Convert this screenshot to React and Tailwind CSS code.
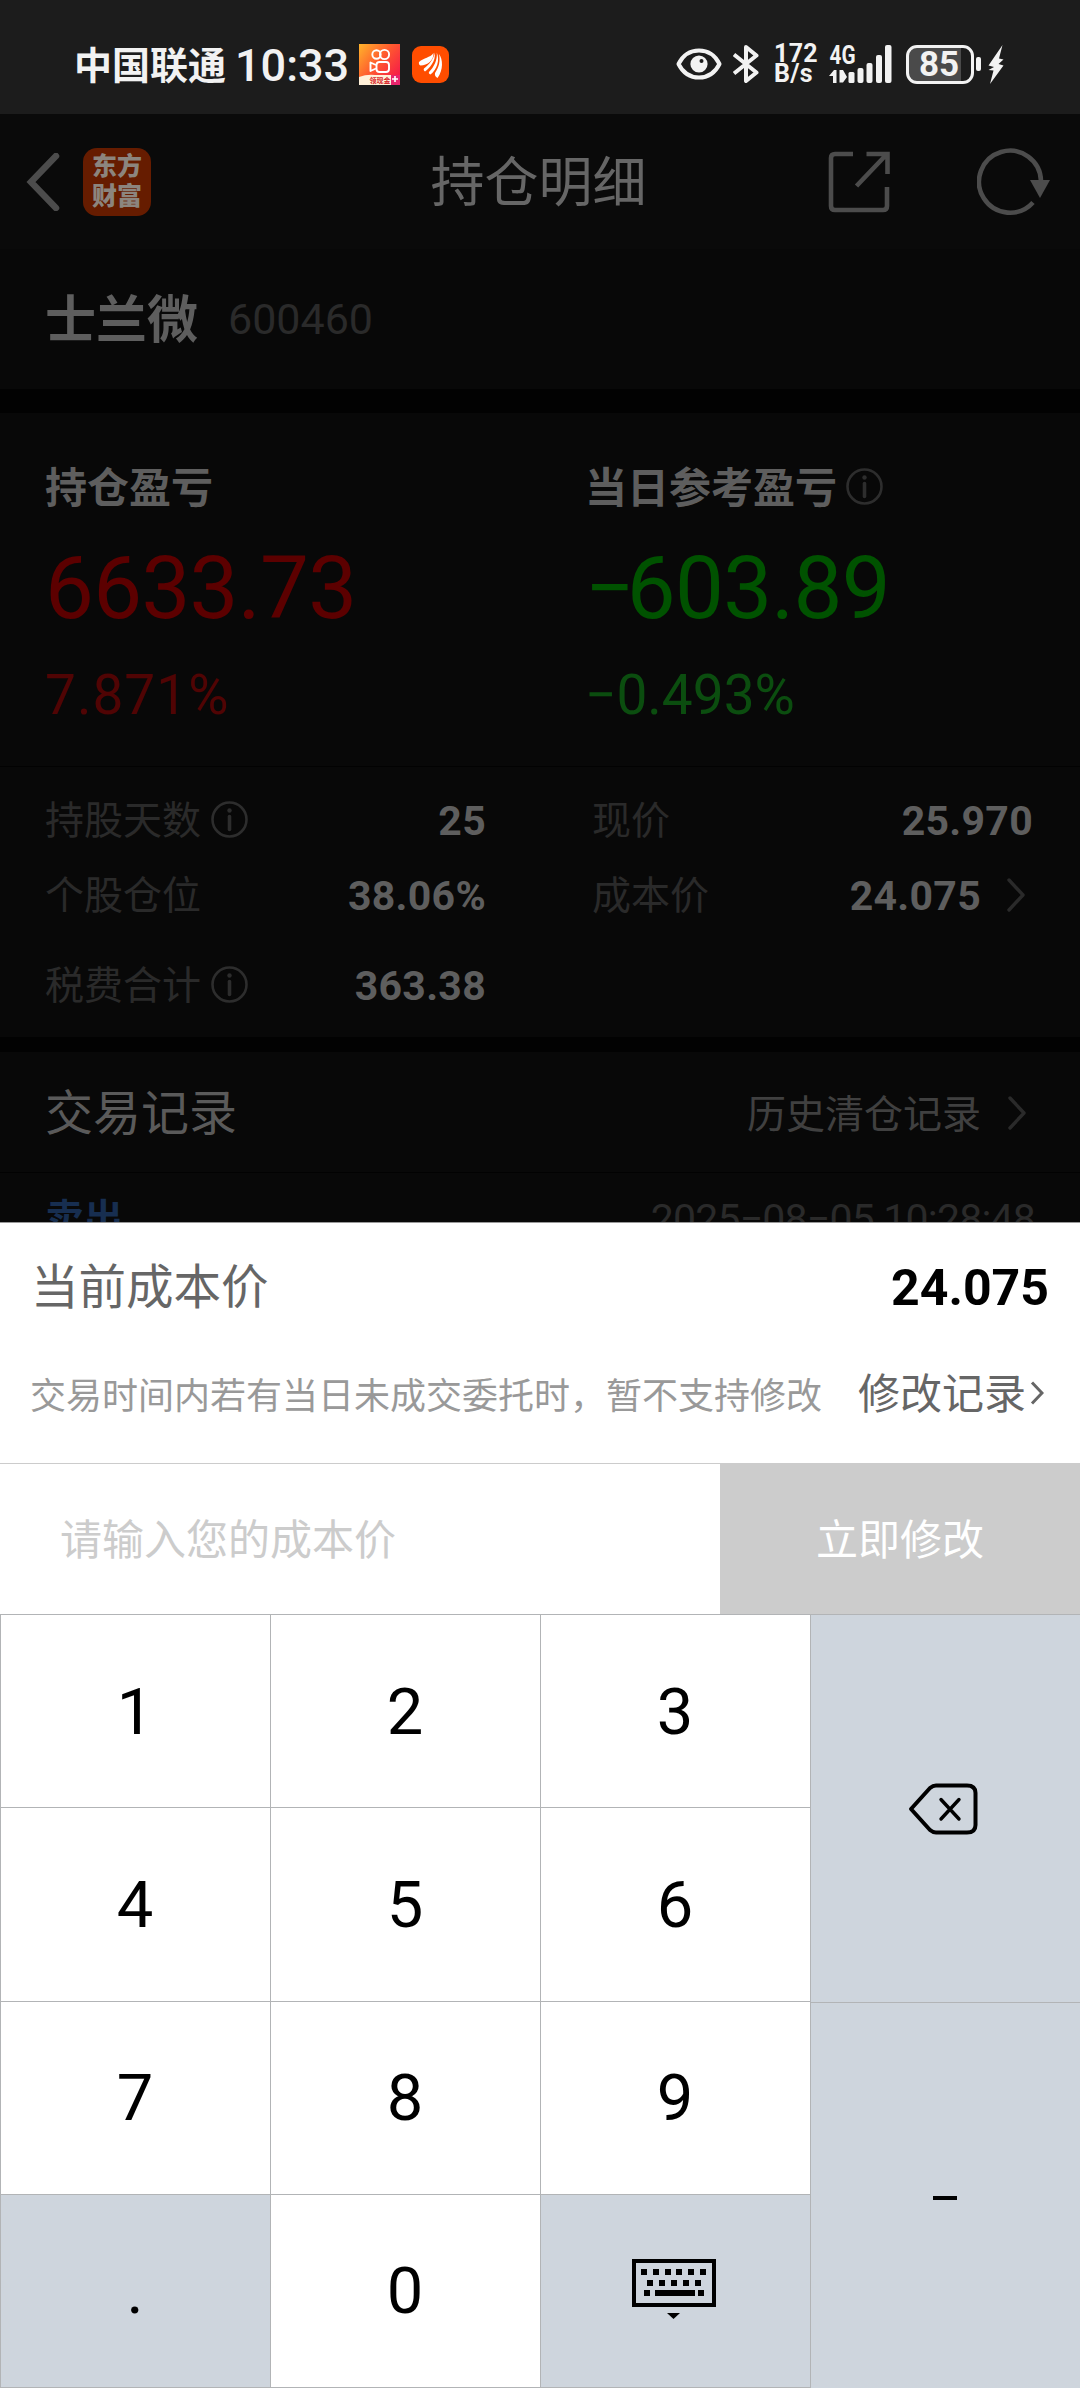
import { clsx } from "clsx";

const KEYS = ["1", "2", "3", "4", "5", "6", "7", "8", "9", ".", "0", "kb"];

// ── Icons ────────────────────────────────────────────────
function InfoIcon() {
  return (
    <svg className="w-[38px] h-[38px] text-[#2d2d2d]" viewBox="0 0 38 38" fill="none" stroke="currentColor">
      <circle cx="18.500" cy="18.500" r="17" strokeWidth="2.6" />
      <path d="M18.500 15.500v13" strokeWidth="3.6" strokeLinecap="round" />
      <circle cx="18.500" cy="9.500" r="2.2" fill="currentColor" stroke="none" />
    </svg>
  );
}

function Chevron({ className }) {
  return (
    <svg className={clsx("w-[18px] h-[34px] text-[#2a2a2a]", className)} viewBox="0 0 18 34" fill="none" stroke="currentColor">
      <path d="M2 2l14 15L2 32" strokeWidth="3.4" strokeLinecap="round" strokeLinejoin="round" />
    </svg>
  );
}

function KuaishouIcon() {
  return (
    <svg className="w-[41px] h-[41px]" viewBox="0 0 41 41">
      <defs>
        <linearGradient id="ks" x1="0" y1="0" x2="1" y2="0.8">
          <stop offset="0" stopColor="#ffb52b" />
          <stop offset="0.5" stopColor="#ff5a2e" />
          <stop offset="1" stopColor="#f5184a" />
        </linearGradient>
      </defs>
      <rect width="41" height="41" fill="url(#ks)" />
      <g fill="none" stroke="#fff" strokeWidth="1.9">
        <circle cx="17.5" cy="10.5" r="4.2" />
        <circle cx="25.5" cy="10.5" r="4.6" />
        <rect x="17.5" y="18" width="12.5" height="10" rx="3" />
        <path d="M17 21l-5.500-2.500v8.500l5.500-2.500" strokeLinejoin="round" />
      </g>
      <path d="M0 33q8-3 16-2h16v10H0z" fill="#fff0d8" />
      <path d="M32 31h9v10h-9z" fill="#e8246c" />
      <path d="M36 32v6M33 35h6" stroke="#fff" strokeWidth="1.6" />
      <text x="10.500" y="39" fontSize="7" fontWeight="700" fill="#d8252a" fontFamily="Noto Sans CJK SC, sans-serif">领现金</text>
    </svg>
  );
}

function EastMoneyIcon() {
  return (
    <svg className="w-[37px] h-[37px]" viewBox="0 0 37 37">
      <rect width="37" height="37" rx="9" fill="#ff4d00" />
      <g fill="#fff">
        <path d="M7 16C12 11.500 18 12 21.500 7C22 14 15.500 19.500 8.500 19.500C7 19 6.600 17 7 16z" />
        <path d="M22.500 6.500C24.500 15 17 22.500 13 25.500C11.500 24.500 11.500 23.500 12 22.500C17 18.500 22 13 22.500 6.500z" />
        <path d="M24.800 6.500C28 14 25 23.500 18.500 28.500C17 28 16.500 27 17 26C22 21 25.500 14 24.800 6.500z" />
        <path d="M27 8C31 13 31.500 24 25.500 32C23.500 31 22.500 29 23 27C27 21 28.500 15 27 8z" />
      </g>
    </svg>
  );
}

function EyeIcon() {
  return (
    <svg className="w-[46px] h-[32px]" viewBox="0 0 46 32" fill="none">
      <path d="M2.500 16C7 7 14.500 2.500 23 2.500S39 7 43.500 16C39 25 31.500 29.500 23 29.500S7 25 2.500 16z" stroke="#f2f2f2" strokeWidth="4" strokeLinejoin="round" />
      <circle cx="23" cy="16" r="8.600" fill="#f2f2f2" />
      <circle cx="25.500" cy="13" r="2" fill="#1c1c1c" />
    </svg>
  );
}

function BluetoothIcon() {
  return (
    <svg className="w-[26px] h-[40px]" viewBox="0 0 26 40" fill="none" stroke="#f2f2f2" strokeWidth="4" strokeLinejoin="round">
      <path d="M1 10.500L23.500 28.500L13 37V3l10.500 8.500L1 29.500" />
    </svg>
  );
}

function SignalIcon() {
  return (
    <svg className="w-[63px] h-[38px] overflow-visible" viewBox="0 0 63 38" fill="#f2f2f2">
      <text x="0.500" y="19" fontSize="25" fontWeight="700" fontFamily="Roboto, sans-serif" textLength="26" lengthAdjust="spacingAndGlyphs">4G</text>
      <path d="M0 31l5-6h2.500v13H4V31zM10.500 25H14l4 7-4 5.500h-3.500z" />
      <rect x="19.500" y="27" width="6" height="11" rx="1.500" />
      <rect x="28.500" y="23" width="6" height="15" rx="2" />
      <rect x="37.500" y="18" width="6" height="20" rx="2" />
      <rect x="47" y="10" width="6" height="28" rx="2" />
      <rect x="56" y="0" width="6.500" height="38" rx="2" />
    </svg>
  );
}

function BackspaceIcon() {
  return (
    <svg className="w-[70px] h-[52px]" viewBox="0 0 70 52" fill="none" stroke="#000" strokeLinecap="round" strokeLinejoin="round">
      <path d="M3 26L22 5Q25 2.500 28 2.500H59Q67.500 2.500 67.500 10V42Q67.500 49.500 59 49.500H28Q25 49.500 22 47z" strokeWidth="4" />
      <path d="M33 16.500L51 36M51 16.500L33 36" strokeWidth="3.400" />
    </svg>
  );
}

function KeyboardIcon() {
  return (
    <svg className="w-[84px] h-[61px]" viewBox="0 0 84 61">
      <rect x="2" y="2" width="80" height="44" fill="none" stroke="#000" strokeWidth="4" />
      {[9, 21, 33, 44, 56, 68].map((x) => (
        <rect key={x} x={x} y="10" width="6" height="6" />
      ))}
      {[15, 27, 39, 51, 63].map((x) => (
        <rect key={x} x={x} y="21" width="6" height="6" />
      ))}
      <rect x="12" y="31" width="6" height="6" />
      <rect x="23" y="31" width="40" height="6" />
      <rect x="66" y="31" width="6" height="6" />
      <path d="M35 54h13l-6.500 6z" />
    </svg>
  );
}

// ── Status bar ───────────────────────────────────────────
function StatusBar() {
  return (
    <div className="h-[114px] pt-[14px] pl-[74px] pr-[76px] bg-[#1c1c1c] text-[#f2f2f2] flex items-center">
      <span className="pt-[3px] text-[38px] font-bold leading-none">中国联通</span>
      <span className="ml-[9px] w-[111px] pt-[2px] text-[45px] font-medium leading-none">10:33</span>
      <span className="ml-[13px]"><KuaishouIcon /></span>
      <span className="ml-[12px]"><EastMoneyIcon /></span>
      <div className="ml-auto flex items-center">
        <EyeIcon />
        <span className="ml-[11px]"><BluetoothIcon /></span>
        <div className="ml-[15px] w-[43px] text-[25px] leading-[20px] font-bold tracking-[0.3px]">
          <div>172</div>
          <div>B/s</div>
        </div>
        <span className="ml-[12px]"><SignalIcon /></span>
        <div className="ml-[14px] w-[68px] h-[39px] rounded-[11px] border-[3px] border-[#f2f2f2] bg-[linear-gradient(90deg,#4a4a4a_52px,#1c1c1c_52px)] flex items-center justify-center pr-[2px]">
          <span className="text-[35px] font-bold leading-none">85</span>
        </div>
        <div className="ml-[2px] w-[5px] h-[14px] rounded-[2px] bg-[#f2f2f2]" />
        <svg className="ml-[7px] w-[16px] h-[39px]" viewBox="0 0 16 39" fill="#f2f2f2">
          <path d="M14.500 0L0.500 20.500l5.500 1.500L0.500 25l5 .5L2 39L15.500 20.500l-5-1.500L15.500 14.500l-4.500-1z" />
        </svg>
      </div>
    </div>
  );
}

// ── Header ───────────────────────────────────────────────
function Header() {
  return (
    <div className="h-[135px] bg-[#0a0a0a] pl-[26px] pr-[29px] grid grid-cols-3 items-center">
      <div className="flex items-center">
        <svg className="w-[34px] h-[58px]" viewBox="0 0 34 58" fill="none">
          <path d="M30 3L5 29l25 26" stroke="#4c4c4c" strokeWidth="6.500" strokeLinecap="round" />
        </svg>
        <div className="ml-[23px] w-[68px] h-[68px] rounded-[14px] bg-[#661c00] text-[#8c857e] text-[25px] leading-[30px] font-black text-center flex flex-col justify-center">
          <div>东方</div>
          <div>财富</div>
        </div>
      </div>
      <h1 className="pt-[5px] text-[54px] leading-none text-center text-[#666]">持仓明细</h1>
      <div className="flex items-center justify-end">
        <svg className="w-[62px] h-[62px]" viewBox="0 0 62 62" fill="none" stroke="#4c4c4c" strokeWidth="4.600">
          <path d="M25 3H7Q3 3 3 7V55Q3 59 7 59H55Q59 59 59 55V36" />
          <path d="M38.500 3H59.500V23M59 3L28.500 35" />
        </svg>
        <svg className="ml-[87px] w-[74px] h-[68px]" viewBox="0 0 74 68" fill="none">
          <path d="M56 54.500A31 31 0 1 1 64 33" stroke="#4c4c4c" strokeWidth="4.600" />
          <path d="M53 32h20L63 50z" fill="#4c4c4c" />
        </svg>
      </div>
    </div>
  );
}

// ── Profit block ─────────────────────────────────────────
function Profit({ title, value, rate, info, className, rateClassName }) {
  return (
    <div className="flex flex-col">
      <div className="flex items-center gap-[9px] h-[44px]">
        <span className="pt-[3px] text-[42px] leading-none font-bold text-[#5e5e5e]">{title}</span>
        {info && <InfoIcon />}
      </div>
      <div className={clsx("mt-[35px] text-[87px] leading-[88px]", className)}>{value}</div>
      <div className={clsx("mt-[34px] text-[55px] leading-[58px]", rateClassName)}>{rate}</div>
    </div>
  );
}

function Stat({ label, value, info, arrow }) {
  return (
    <div className="flex items-center h-[44px]">
      <span className="pt-[3px] text-[39px] leading-none text-[#2a2a2a]">{label}</span>
      {info && <span className="ml-[10px]"><InfoIcon /></span>}
      <span className="ml-auto pt-[2px] text-[41px] leading-none font-bold tracking-[0.3px] text-[#5e5e5e]">{value}</span>
      {arrow && <Chevron className="ml-[26px] mr-[8px]" />}
    </div>
  );
}

// ── Cost price sheet ─────────────────────────────────────
function CostSheet() {
  return (
    <div className="h-[392px] bg-white border-t border-[#999] flex flex-col">
      <div className="h-[129px] pl-[31px] pr-[31px] flex items-center justify-between">
        <span className="pt-[3px] text-[47.5px] leading-none text-[#666]">当前成本价</span>
        <span className="pt-[2px] text-[50px] leading-none font-bold text-black">24.075</span>
      </div>
      <div className="h-[112px] pb-[25px] pl-[30px] pr-[36px] flex items-center justify-between whitespace-nowrap">
        <span className="pt-[3px] text-[36px] leading-none text-[#999]">交易时间内若有当日未成交委托时，暂不支持修改</span>
        <span className="flex items-center text-[42px] leading-none text-[#666]">
          修改记录
          <svg className="ml-[4px] mb-[4px] w-[14px] h-[24px]" viewBox="0 0 14 24" fill="none" stroke="#666" strokeWidth="3">
            <path d="M2 1.500L12 12L2 22.500" />
          </svg>
        </span>
      </div>
      <div className="h-[151px] border-t border-[#ccc] flex">
        <div className="w-[720px] pt-[3px] pl-[60px] flex items-center text-[42px] text-[#ccc]">请输入您的成本价</div>
        <button className="flex-1 pt-[3px] bg-[#ccc] text-white text-[42px]">立即修改</button>
      </div>
    </div>
  );
}

function Keypad() {
  return (
    <div className="h-[774px] flex bg-[#ced5dd] text-black text-[65px] leading-none">
      <div className="w-[811px] h-[774px] grid grid-cols-3 grid-rows-4 gap-px p-px bg-[#b2b4b6]">
        {KEYS.map((key) => (
          <div
            key={key}
            className={clsx("flex items-center justify-center", key === "." || key === "kb" ? "bg-[#ced5dd]" : "bg-white")}
          >
            {key === "kb" ? <span className="pb-[2px] pr-[3px]"><KeyboardIcon /></span> : <span className="pt-[2px] pr-px">{key}</span>}
          </div>
        ))}
      </div>
      <div className="flex-1 flex flex-col border-t border-[#b2b4b6]">
        <div className="h-[388px] border-b border-[#b2b4b6] flex items-center justify-center pr-[5px]"><BackspaceIcon /></div>
        <div className="flex-1 pt-[4px] pr-[2px] flex items-center justify-center">
          <div className="w-[24px] h-[4px] bg-black" />
        </div>
      </div>
    </div>
  );
}

export default function App() {
  return (
    <div className="w-[1080px] h-[2388px] overflow-hidden bg-[#080808] font-[Roboto,'Noto_Sans_CJK_SC',sans-serif]">
      <StatusBar />
      <div className="h-[1108px] overflow-hidden">
        <Header />
        <div className="h-[140px] px-[45px] flex items-center">
          <span className="pt-[3px] text-[51px] leading-none font-bold text-[#5e5e5e]">士兰微</span>
          <span className="ml-[30px] text-[43px] leading-none text-[#2a2a2a]">600460</span>
        </div>
        <div className="h-[24px] bg-[#020202]" />

        <div className="h-[354px] pt-[52px] px-[45px] grid grid-cols-[540px_1fr] items-start border-b border-[#020202]">
          <Profit
            title="持仓盈亏"
            value="6633.73"
            rate="7.871%"
            className="text-[#5c0000] tracking-[-0.7px]"
            rateClassName="text-[#500404] tracking-[1px]"
          />
          <Profit
            title="当日参考盈亏"
            value="−603.89"
            rate="−0.493%"
            info
            className="text-[#005200] tracking-[-0.7px] first-letter:tracking-[-8px]"
            rateClassName="text-[#0b4d0f]"
          />
        </div>

        <div className="h-[270px] pt-[31px] pl-[45px] pr-[45px] grid grid-cols-[441px_441px] gap-x-[106px] items-start">
          <div className="flex flex-col">
            <Stat label="持股天数" value="25" info />
            <div className="mt-[31px]"><Stat label="个股仓位" value="38.06%" /></div>
            <div className="mt-[46px]"><Stat label="税费合计" value="363.38" info /></div>
          </div>
          <div className="flex flex-col">
            <Stat label="现价" value="25.970" />
            <div className="mt-[31px]"><Stat label="成本价" value="24.075" arrow /></div>
          </div>
        </div>
        <div className="h-[15px] bg-[#020202]" />

        <div className="h-[121px] pl-[45px] pr-[54px] flex items-center border-b border-[#020202]">
          <span className="pt-[3px] text-[48px] leading-none text-[#5a5a5a]">交易记录</span>
          <span className="ml-auto text-[39px] leading-none text-[#404040] pt-[7px]">历史清仓记录</span>
          <Chevron className="ml-[27px] mt-[2px]" />
        </div>
        <div className="pt-[24px] pl-[45px] pr-[45px] flex justify-between">
          <span className="text-[39px] leading-[44px] font-bold text-[#172e50]">卖出</span>
          <span className="text-[41px] leading-[44px] tracking-[-0.8px] text-[#2a2a2a]">2025−08−05 10:28:48</span>
        </div>
      </div>
      <CostSheet />
      <Keypad />
    </div>
  );
}
